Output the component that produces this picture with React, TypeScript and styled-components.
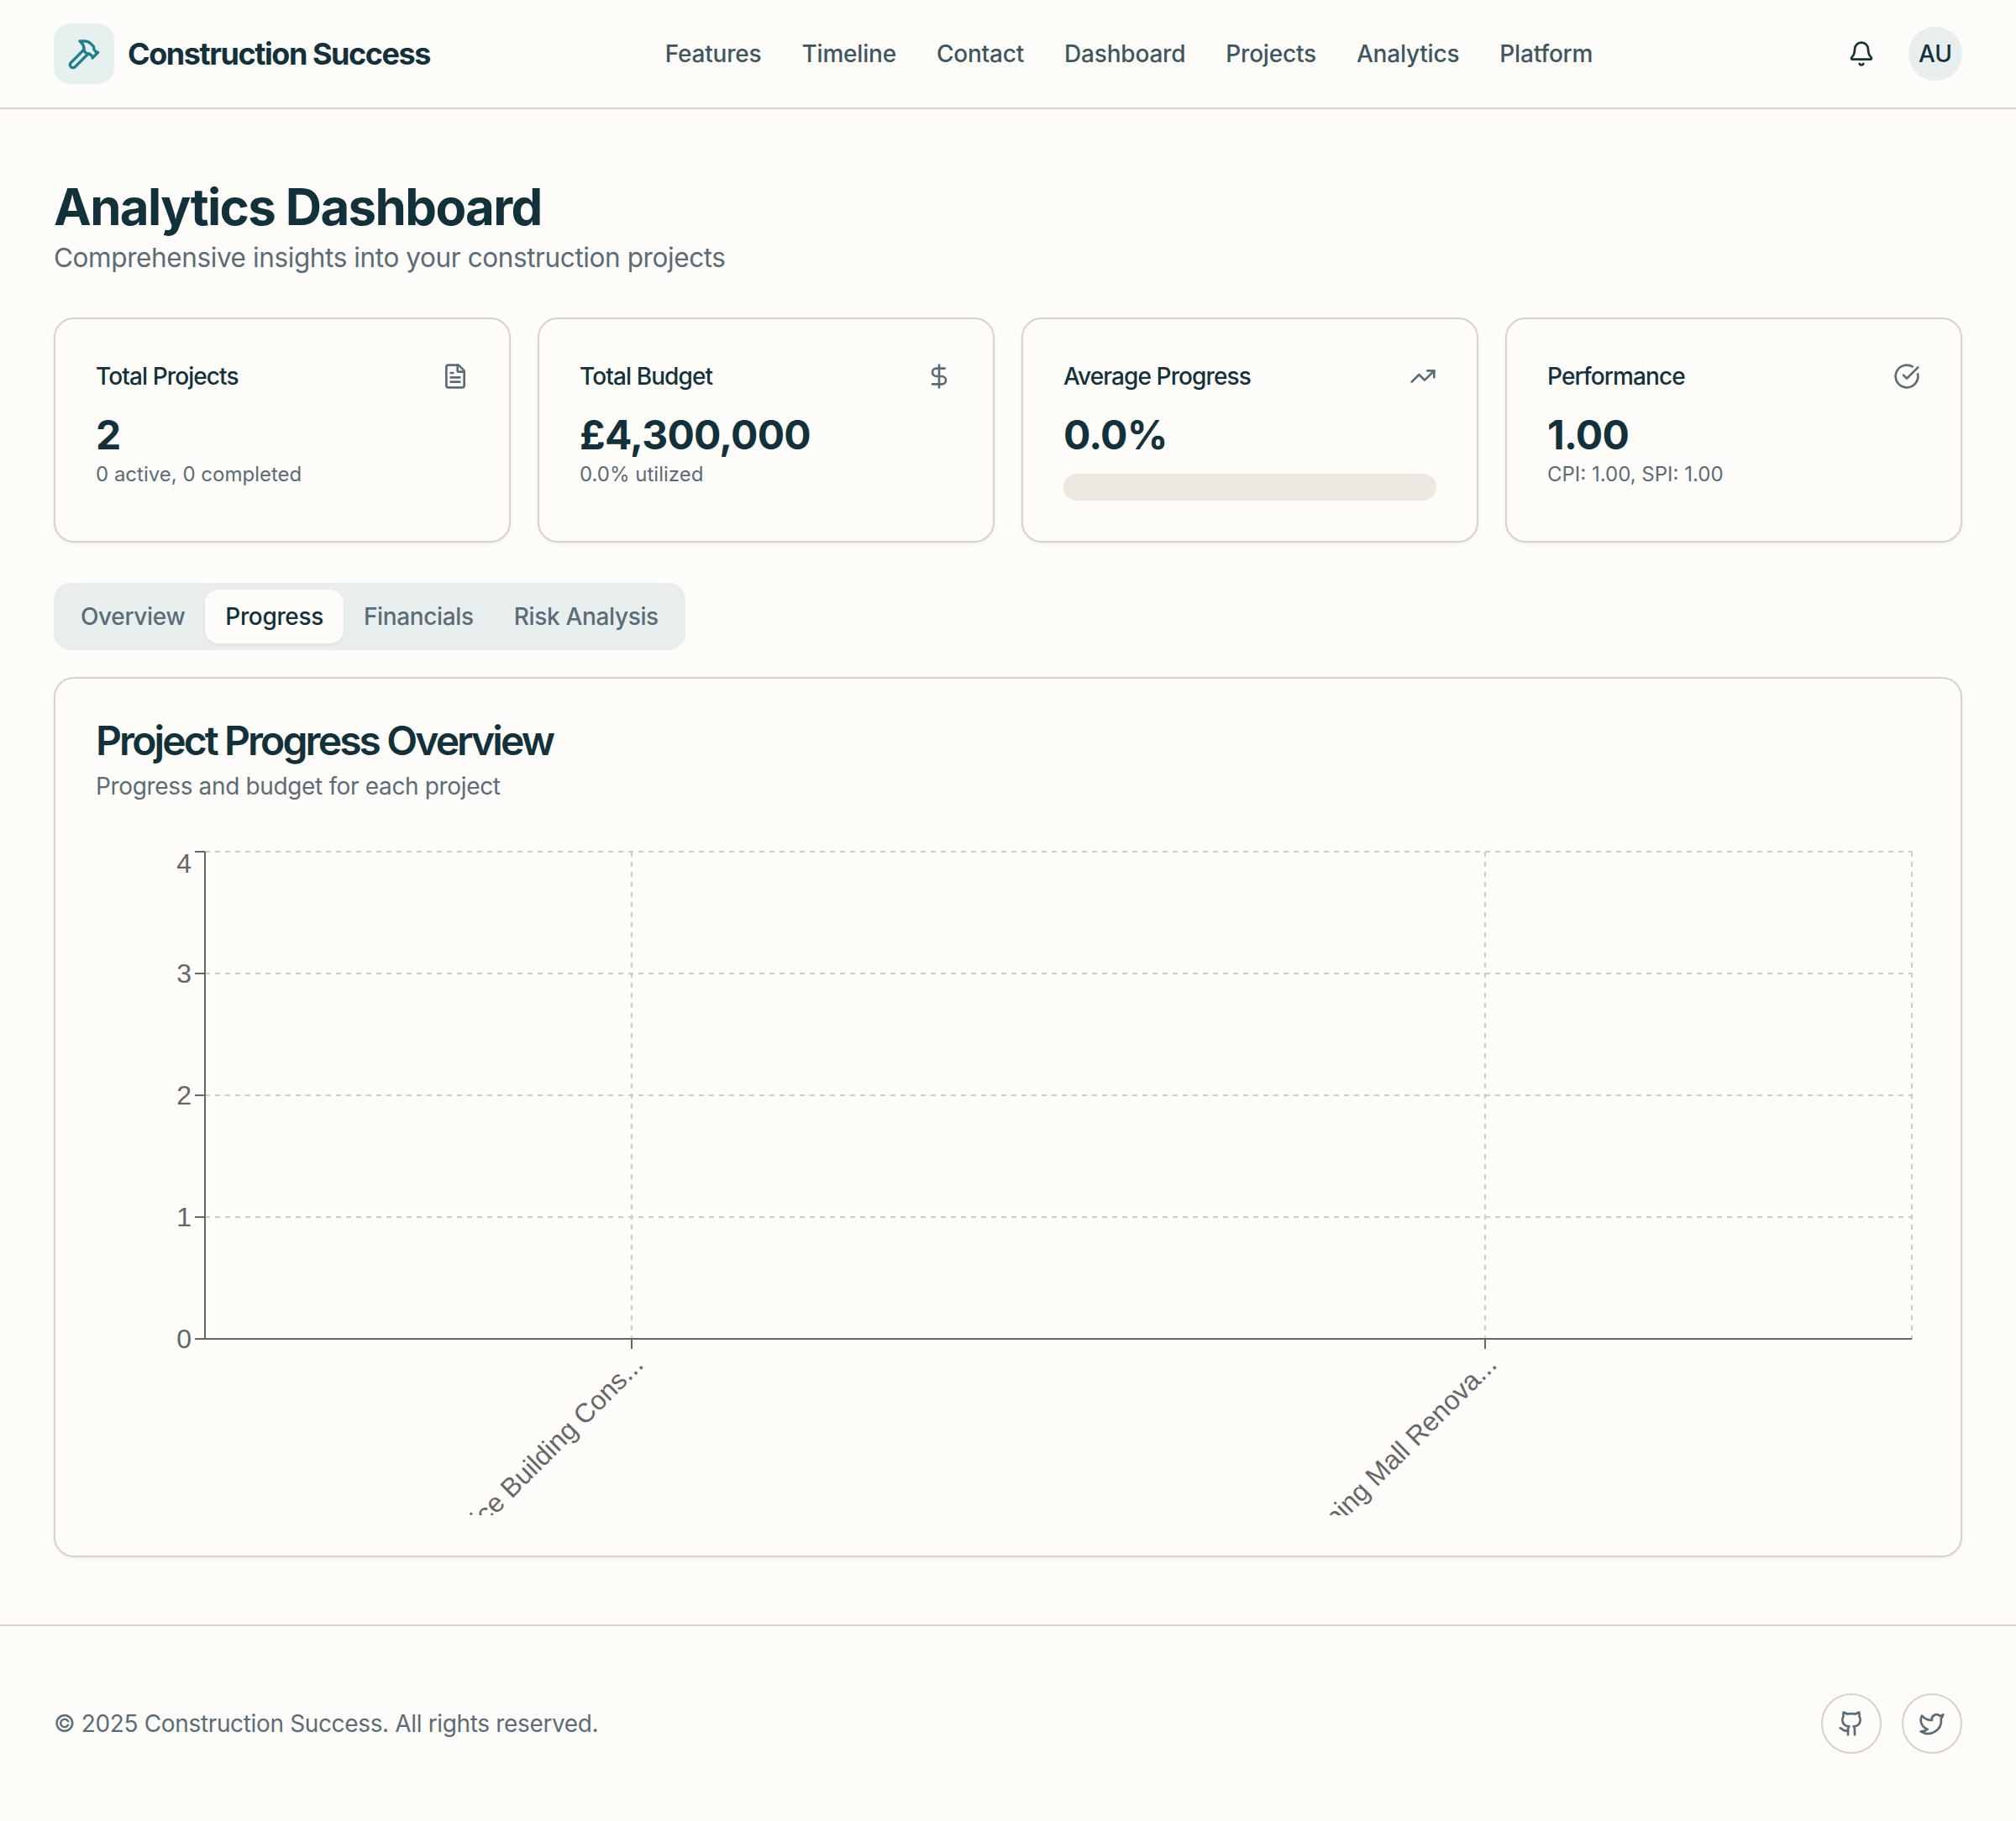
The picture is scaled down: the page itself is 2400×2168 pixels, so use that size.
import React from "react";
import styled, { createGlobalStyle } from "styled-components";
import { Bell, CircleCheckBig, DollarSign, FileText, Github, Hammer, TrendingUp, Twitter } from "lucide-react";

const Global = createGlobalStyle`
  * { box-sizing: border-box; }
  html, body { margin: 0; padding: 0; background: #fdfcf8; }
  body { font-family: Inter, "Liberation Sans", sans-serif; color: #13313b; }
`;

const Page = styled.div`
  width: 2400px;
  min-height: 2168px;
  display: flex;
  flex-direction: column;
  background: #fdfcf8;
`;

const Header = styled.header`
  height: 130px;
  padding: 0 64px;
  display: flex;
  align-items: center;
  justify-content: space-between;
  border-bottom: 2px solid #d9d2c4;
`;

const Brand = styled.div`
  display: flex;
  align-items: center;
  gap: 16px;
`;

const LogoBox = styled.div`
  width: 72px;
  height: 72px;
  border-radius: 20px;
  background: #e6f1ef;
  color: #1f7f8c;
  display: flex;
  align-items: center;
  justify-content: center;
`;

const BrandName = styled.span`
  font-size: 36px;
  line-height: 56px;
  font-weight: 700;
  letter-spacing: -1.44px;
  color: #13313b;
`;

const Nav = styled.nav`
  display: flex;
  gap: 48px;
`;

const NavLink = styled.a`
  font-size: 28px;
  line-height: 40px;
  font-weight: 500;
  letter-spacing: -0.2px;
  color: #3f5660;
`;

const HeaderActions = styled.div`
  width: 160px;
  display: flex;
  align-items: center;
  justify-content: flex-end;
  gap: 24px;
`;

const BellButton = styled.button`
  width: 64px;
  height: 64px;
  padding: 0;
  background: none;
  border: 0;
  color: #13313b;
  display: flex;
  align-items: center;
  justify-content: center;
`;

const Avatar = styled.div`
  width: 64px;
  height: 64px;
  border-radius: 50%;
  background: #e8eeee;
  color: #13313b;
  font-size: 28px;
  font-weight: 500;
  display: flex;
  align-items: center;
  justify-content: center;
`;

const Main = styled.main`
  flex: 1;
  padding: 80px 64px;
  display: flex;
  flex-direction: column;
`;

const Title = styled.h1`
  margin: 0;
  font-size: 60px;
  line-height: 72px;
  font-weight: 700;
  letter-spacing: -1.66px;
  color: #13313b;
`;

const Subtitle = styled.p`
  margin: 5px 0 0;
  font-size: 31.5px;
  line-height: 40px;
  letter-spacing: -0.4px;
  color: #5a6c77;
`;

const Stats = styled.section`
  margin-top: 51px;
  display: grid;
  grid-template-columns: repeat(4, 1fr);
  gap: 32px;
`;

const Card = styled.div`
  background: #fdfcf8;
  border: 2px solid #d9d2c4;
  border-radius: 24px;
  box-shadow: 0 2px 4px rgba(0, 0, 0, 0.05);
`;

const StatCard = styled(Card)`
  height: 268px;
  padding: 48px;
`;

const StatHead = styled.div`
  height: 40px;
  display: flex;
  align-items: center;
  justify-content: space-between;
  color: #5a6c77;
`;

const StatLabel = styled.span`
  font-size: 28px;
  font-weight: 500;
  letter-spacing: -0.9px;
  color: #13313b;
`;

const StatValue = styled.div`
  margin-top: 22px;
  font-size: 48px;
  line-height: 56px;
  font-weight: 700;
  letter-spacing: -0.75px;
  color: #13313b;
`;

const StatNote = styled.div`
  margin-top: 3px;
  font-size: 24px;
  line-height: 32px;
  color: #5a6c77;
`;

const Track = styled.div`
  margin-top: 18px;
  height: 32px;
  border-radius: 16px;
  background: #ece7e1;
`;

const TabList = styled.div`
  margin-top: 48px;
  align-self: flex-start;
  height: 80px;
  padding: 8px;
  border-radius: 20px;
  background: #e8eeee;
  display: flex;
`;

const Tab = styled.button<{ $active?: boolean }>`
  height: 64px;
  padding: 0 24px;
  border: 0;
  border-radius: 16px;
  font-family: inherit;
  font-size: 28px;
  font-weight: 500;
  letter-spacing: -0.35px;
  color: ${(p) => (p.$active ? "#13313b" : "#5a6c77")};
  background: ${(p) => (p.$active ? "#fdfcf8" : "transparent")};
  box-shadow: ${(p) => (p.$active ? "0 2px 4px rgba(0,0,0,0.05)" : "none")};
`;

const ChartCard = styled(Card)`
  margin-top: 32px;
  padding: 48px;
`;

const ChartTitle = styled.h2`
  margin: 0;
  font-size: 48px;
  line-height: 52px;
  font-weight: 600;
  letter-spacing: -2.9px;
  color: #13313b;
`;

const ChartNote = styled.p`
  margin: 8px 0 0;
  font-size: 28px;
  line-height: 40px;
  letter-spacing: -0.35px;
  color: #5a6c77;
`;

const ChartArea = styled.div`
  margin-top: 48px;
  height: 800px;
`;

const ChartSvg = styled.svg`
  display: block;
  width: 100%;
  height: 800px;
  overflow: hidden;
`;

const Footer = styled.footer`
  padding: 80px 64px;
  border-top: 2px solid #d9d2c4;
  display: flex;
  align-items: center;
  justify-content: space-between;
`;

const Copyright = styled.span`
  font-size: 28px;
  line-height: 40px;
  letter-spacing: -0.35px;
  color: #5a6c77;
`;

const Socials = styled.div`
  display: flex;
  gap: 24px;
`;

const SocialButton = styled.a`
  width: 72px;
  height: 72px;
  border-radius: 50%;
  border: 2px solid #d9d2c4;
  color: #5a6c77;
  display: flex;
  align-items: center;
  justify-content: center;
`;

const links = ["Features", "Timeline", "Contact", "Dashboard", "Projects", "Analytics", "Platform"];
const tabs = ["Overview", "Progress", "Financials", "Risk Analysis"];

const L = 130; // plot left in svg
const R = 2162;
const T = 10;
const B = 590;
const ticks = [0, 1, 2, 3, 4];
const yOf = (t: number) => B - (t * (B - T)) / 4;
const cats = [
  { x: 638, label: "Office Building Cons..." },
  { x: 1654, label: "Shopping Mall Renova..." },
];

function Chart() {
  return (
    <ChartSvg viewBox="0 0 2172 800">
      <g stroke="#ccc" strokeWidth="2" strokeDasharray="6 6" fill="none">
        {ticks.slice(1).map((t) => (
          <line key={t} x1={L} x2={R} y1={yOf(t)} y2={yOf(t)} />
        ))}
        {cats.map((c) => (
          <line key={c.x} x1={c.x} x2={c.x} y1={T} y2={B} />
        ))}
        <line x1={R} x2={R} y1={T} y2={B} />
      </g>
      <g stroke="#666" strokeWidth="2" fill="none">
        <line x1={L} x2={L} y1={T} y2={B} />
        <line x1={L} x2={R} y1={B} y2={B} />
        {ticks.map((t) => (
          <line key={t} x1={L - 12} x2={L} y1={yOf(t)} y2={yOf(t)} />
        ))}
        {cats.map((c) => (
          <line key={c.x} x1={c.x} x2={c.x} y1={B} y2={B + 12} />
        ))}
      </g>
      <g fill="#666" fontFamily="'Liberation Sans', Arial, sans-serif" fontSize="32">
        {ticks.map((t) => (
          <text key={t} x={L - 16} y={t === 4 ? yOf(t) + 25 : yOf(t) + 11} textAnchor="end">
            {t}
          </text>
        ))}
        {cats.map((c) => (
          <text key={c.x} x={c.x + 7} y={B + 36} textAnchor="end" transform={`rotate(-45 ${c.x + 7} ${B + 24})`}>
            {c.label}
          </text>
        ))}
      </g>
    </ChartSvg>
  );
}

export default function App() {
  return (
    <Page>
      <Global />
      <Header>
        <Brand>
          <LogoBox>
            <Hammer size={40} strokeWidth={2} />
          </LogoBox>
          <BrandName>Construction Success</BrandName>
        </Brand>
        <Nav>
          {links.map((l) => (
            <NavLink key={l}>{l}</NavLink>
          ))}
        </Nav>
        <HeaderActions>
          <BellButton>
            <Bell size={32} strokeWidth={2} />
          </BellButton>
          <Avatar>AU</Avatar>
        </HeaderActions>
      </Header>
      <Main>
        <Title>Analytics Dashboard</Title>
        <Subtitle>Comprehensive insights into your construction projects</Subtitle>
        <Stats>
          <StatCard>
            <StatHead>
              <StatLabel>Total Projects</StatLabel>
              <FileText size={32} />
            </StatHead>
            <StatValue>2</StatValue>
            <StatNote>0 active, 0 completed</StatNote>
          </StatCard>
          <StatCard>
            <StatHead>
              <StatLabel>Total Budget</StatLabel>
              <DollarSign size={32} />
            </StatHead>
            <StatValue>£4,300,000</StatValue>
            <StatNote>0.0% utilized</StatNote>
          </StatCard>
          <StatCard>
            <StatHead>
              <StatLabel>Average Progress</StatLabel>
              <TrendingUp size={32} />
            </StatHead>
            <StatValue>0.0%</StatValue>
            <Track />
          </StatCard>
          <StatCard>
            <StatHead>
              <StatLabel>Performance</StatLabel>
              <CircleCheckBig size={32} />
            </StatHead>
            <StatValue>1.00</StatValue>
            <StatNote>CPI: 1.00, SPI: 1.00</StatNote>
          </StatCard>
        </Stats>
        <TabList>
          {tabs.map((t) => (
            <Tab key={t} $active={t === "Progress"}>
              {t}
            </Tab>
          ))}
        </TabList>
        <ChartCard>
          <ChartTitle>Project Progress Overview</ChartTitle>
          <ChartNote>Progress and budget for each project</ChartNote>
          <ChartArea>
            <Chart />
          </ChartArea>
        </ChartCard>
      </Main>
      <Footer>
        <Copyright>© 2025 Construction Success. All rights reserved.</Copyright>
        <Socials>
          <SocialButton>
            <Github size={32} />
          </SocialButton>
          <SocialButton>
            <Twitter size={32} />
          </SocialButton>
        </Socials>
      </Footer>
    </Page>
  );
}
